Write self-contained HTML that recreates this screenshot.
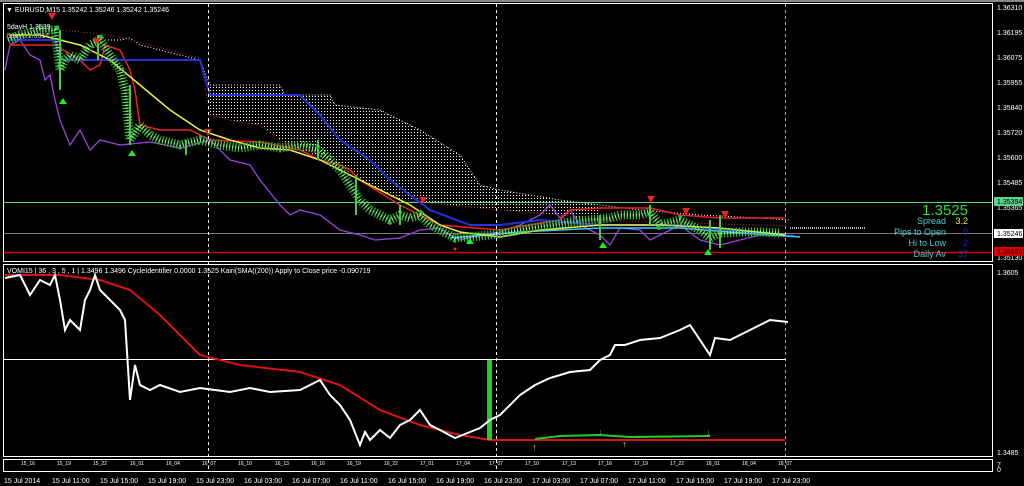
<!DOCTYPE html>
<html><head><meta charset="utf-8"><style>
html,body{margin:0;padding:0;background:#000;width:1024px;height:486px;overflow:hidden}
svg{display:block;font-family:"Liberation Sans",sans-serif}
</style></head><body>
<svg width="1024" height="486" viewBox="0 0 1024 486" xmlns="http://www.w3.org/2000/svg">
<defs>
<pattern id="dots" width="3" height="3" patternUnits="userSpaceOnUse"><rect x="0" y="0" width="1" height="1" fill="#fff"/></pattern>
</defs>
<rect width="1024" height="486" fill="#000"/>
<rect x="0" y="0" width="1024" height="2" fill="#888"/>
<rect x="3.5" y="3.5" width="989" height="258" fill="none" stroke="#fff" stroke-width="1"/>
<line x1="4" y1="202.5" x2="992" y2="202.5" stroke="#5fd08a" stroke-width="1"/>
<line x1="4" y1="233.5" x2="992" y2="233.5" stroke="#777" stroke-width="1"/>
<line x1="4" y1="252.5" x2="992" y2="252.5" stroke="#c00" stroke-width="1.5"/>
<path d="M210,85 L280,85 L285,95 L330,95 L335,105 L380,110 L420,130 L460,155 L480,185 L500,190 L530,195 L560,200 L600,205 L600,220 L560,215 L500,210 L450,205 L400,200 L370,185 L330,160 L300,150 L280,140 L260,125 L230,120 L210,115 Z" fill="url(#dots)"/>
<polyline points="105,40 120,40 130,38 140,45 180,55 200,60 210,85 280,85 285,95 330,95 335,105 380,110 420,130 460,155 480,185 500,190 530,195 560,200 600,205 640,210 700,215 760,218 790,220" fill="none" stroke="#fff" stroke-width="1" stroke-dasharray="1,2"/>
<polyline points="60,30 110,35 150,45 200,58 210,115 230,120 260,125 280,140 300,150 330,160 370,185 400,200 450,205 500,210 560,215 600,220 650,222 720,224 790,226" fill="none" stroke="#a33" stroke-width="1" stroke-dasharray="1,2"/>
<polyline points="790,228 865,228" fill="none" stroke="#bbb" stroke-width="2" stroke-dasharray="1,1"/>
<polyline points="5,70 10,45 20,40 30,55 40,60 45,80 50,75 55,100 60,120 70,145 80,130 90,150 100,140 120,145 150,142 180,148 210,140 230,160 250,165 260,180 280,205 290,215 300,210 320,215 340,230 360,235 375,240 400,238 420,230 440,228 450,235 460,240 480,235 500,232 520,225 540,215 550,205 560,218 570,210 580,225 600,235 610,245 620,228 640,230 650,240 660,235 680,225 700,240 720,245 740,240 760,235 785,235" fill="none" stroke="#9a44dd" stroke-width="1.3"/>
<polyline points="10,45 55,45 80,60 90,70 100,65 105,45 120,50 130,70 135,90 140,125 160,130 190,130 210,140 260,142 300,150 320,160 340,165 350,170 360,180 400,205 440,225 500,230 560,220 570,210 600,208 650,208 680,215 720,218 785,218" fill="none" stroke="#e22" stroke-width="1.5"/>
<polyline points="10,40 55,40 60,60 200,60 210,95 300,95 320,115 340,140 370,160 390,180 430,210 470,225 500,225 540,220 600,225 680,225 740,232 795,236" fill="none" stroke="#2233dd" stroke-width="2"/>
<polyline points="450,238 520,232 600,228 680,228 740,233 800,237" fill="none" stroke="#3cf" stroke-width="1.5"/>
<polyline points="10,35 40,35 80,45 110,60 140,85 170,110 200,130 230,140 260,148 290,150 320,160 350,175 380,190 410,205 440,225 460,232 500,237 540,230 600,225 660,225 720,228 785,235" fill="none" stroke="#ee4" stroke-width="1.5"/>
<polyline points="8,40 20,35 40,30 55,30 60,70 65,60 70,55 80,60 90,45 100,40 110,55 120,70 125,90 130,140 140,125 150,135 160,140 180,145 200,140 220,145 240,148 260,145 280,148 300,145 320,150 330,160 340,170 350,185 360,200 370,210 380,215 390,220 400,215 410,218 420,215 430,225 440,230 455,238 470,237 490,235 510,232 530,228 550,225 570,222 590,220 610,218 620,215 640,215 650,212 660,225 680,220 700,230 710,238 720,233 740,232 760,232 780,233" fill="none" stroke="#3b3" stroke-width="9" stroke-dasharray="1.2,1.8"/>
<polyline points="8,40 20,35 40,30 55,30 60,70 65,60 70,55 80,60 90,45 100,40 110,55 120,70 125,90 130,140 140,125 150,135 160,140 180,145 200,140 220,145 240,148 260,145 280,148 300,145 320,150 330,160 340,170 350,185 360,200 370,210 380,215 390,220 400,215 410,218 420,215 430,225 440,230 455,238 470,237 490,235 510,232 530,228 550,225 570,222 590,220 610,218 620,215 640,215 650,212 660,225 680,220 700,230 710,238 720,233 740,232 760,232 780,233" fill="none" stroke="#8f8" stroke-width="3" stroke-dasharray="1,2"/>
<g stroke="#4c4" stroke-width="2">
<line x1="60" y1="30" x2="60" y2="90"/><line x1="98" y1="35" x2="98" y2="60"/><line x1="130" y1="85" x2="130" y2="145"/><line x1="356" y1="175" x2="356" y2="215"/><line x1="650" y1="205" x2="650" y2="225"/><line x1="710" y1="220" x2="710" y2="250"/><line x1="720" y1="215" x2="720" y2="248"/><line x1="600" y1="215" x2="600" y2="240"/><line x1="186" y1="140" x2="186" y2="155"/><line x1="318" y1="140" x2="318" y2="160"/><line x1="400" y1="205" x2="400" y2="225"/>
</g>
<g fill="#e22">
<path d="M48,13 L56,13 L52,20 Z"/><path d="M93,38 L101,38 L97,45 Z"/><path d="M419,197 L427,197 L423,204 Z"/><path d="M647,196 L655,196 L651,203 Z"/><path d="M682,208 L690,208 L686,215 Z"/><path d="M721,211 L729,211 L725,218 Z"/><path d="M204,129 L212,129 L208,136 Z"/>
</g>
<g fill="#2e2">
<path d="M59,104 L67,104 L63,98 Z"/><path d="M128,156 L136,156 L132,150 Z"/><path d="M466,244 L474,244 L470,238 Z"/><path d="M599,248 L607,248 L603,242 Z"/><path d="M704,255 L712,255 L708,249 Z"/>
</g>
<circle cx="455" cy="249" r="1.5" fill="#e22"/>
<line x1="208.5" y1="4" x2="208.5" y2="472" stroke="#fff" stroke-dasharray="3,3"/>
<line x1="496.5" y1="4" x2="496.5" y2="472" stroke="#fff" stroke-dasharray="3,3"/>
<line x1="785.5" y1="4" x2="785.5" y2="472" stroke="#aaa" stroke-dasharray="3,3"/>
<g font-size="7" fill="#fff">
<text x="6" y="12">▼ EURUSD,M15  1.35242 1.35246 1.35242 1.35246</text>
<text x="7" y="29">5dayH 1.3539</text>
<text x="7" y="38" fill="#ccc">5dayL 1.3514</text>
</g>
<text x="968" y="215" font-size="15" fill="#3d3" text-anchor="end">1.3525</text>
<g font-size="9" text-anchor="end">
<text x="946" y="224" fill="#5cc">Spread</text><text x="968" y="224" fill="#ee4">3.2</text>
<text x="946" y="235" fill="#5cc">Pips to Open</text><text x="968" y="235" fill="#22c">0</text>
<text x="946" y="246" fill="#5cc">Hi to Low</text><text x="968" y="246" fill="#22c">2</text>
<text x="946" y="257" fill="#5cc">Daily Av</text><text x="968" y="257" fill="#33c">37</text>
</g>
<g font-size="7" fill="#fff">
<text x="997" y="10">1.36310</text><text x="997" y="35">1.36195</text><text x="997" y="60">1.36075</text><text x="997" y="85">1.35955</text><text x="997" y="110">1.35840</text><text x="997" y="135">1.35720</text><text x="997" y="160">1.35600</text><text x="997" y="185">1.35485</text><text x="997" y="210">1.35365</text><text x="997" y="260">1.35130</text>
</g>
<rect x="994" y="197" width="29" height="9" fill="#5fd08a"/><text x="997" y="204" font-size="7" fill="#000">1.35394</text>
<rect x="994" y="229" width="29" height="9" fill="#fff"/><text x="997" y="236" font-size="7" fill="#000">1.35246</text>
<rect x="994" y="247" width="29" height="9" fill="#d00"/><text x="997" y="254" font-size="7" fill="#000">1.35156</text>
<rect x="3.5" y="264.5" width="989" height="192" fill="none" stroke="#fff"/>
<line x1="4" y1="359.5" x2="786" y2="359.5" stroke="#fff"/>
<text x="7" y="273" font-size="7" fill="#fff">VOMI15 | 36 , 3 , 5 , 1 |  1.3496 1.3496  CycleIdentifier 0.0000 1.3525  Kairi(SMA((200)) Apply to Close price -0.090719</text>
<polyline points="5,275 60,275 100,280 130,290 160,315 200,355 240,365 300,372 340,385 380,410 420,425 460,435 490,440 600,440 785,440" fill="none" stroke="#d11" stroke-width="2"/>
<polyline points="535,439 560,436 600,435 630,437 710,436" fill="none" stroke="#2c2" stroke-width="2"/>
<rect x="487" y="360" width="5" height="80" fill="#2c2"/>
<polyline points="5,278 20,275 30,295 40,280 50,285 55,275 60,300 65,330 70,320 80,330 85,300 90,290 95,275 100,290 110,300 120,310 125,320 130,400 135,365 140,385 150,390 160,385 180,392 200,388 215,390 230,392 250,388 270,392 300,390 320,380 330,395 340,405 350,420 360,445 365,432 370,440 380,430 390,438 400,425 410,420 420,410 430,425 440,430 455,438 470,432 480,428 490,420 500,415 510,405 520,395 535,385 550,378 570,372 590,370 600,360 610,355 615,345 625,345 640,340 660,338 680,330 690,325 700,340 710,355 715,338 730,340 740,335 760,325 770,320 788,322" fill="none" stroke="#fff" stroke-width="2"/>
<g fill="#3cc" font-size="9"><text x="598" y="435">↓</text><text x="706" y="435">↓</text></g>
<g fill="#ee4" font-size="9"><text x="532" y="450">↑</text><text x="622" y="447">↑</text></g>
<text x="997" y="275" font-size="7" fill="#fff">1.3605</text>
<text x="997" y="455" font-size="7" fill="#fff">1.3485</text>
<rect x="3.5" y="459.5" width="989" height="12" fill="none" stroke="#fff"/>
<g font-size="5" fill="#fff">
<text x="21" y="465">15_16</text><text x="57" y="465">15_19</text><text x="93" y="465">15_22</text><text x="130" y="465">16_01</text><text x="166" y="465">16_04</text><text x="202" y="465">16_07</text><text x="238" y="465">16_10</text><text x="275" y="465">16_13</text><text x="311" y="465">16_16</text><text x="347" y="465">16_19</text><text x="384" y="465">16_22</text><text x="420" y="465">17_01</text><text x="456" y="465">17_04</text><text x="489" y="465">17_07</text><text x="525" y="465">17_10</text><text x="562" y="465">17_13</text><text x="598" y="465">17_16</text><text x="634" y="465">17_19</text><text x="670" y="465">17_22</text><text x="706" y="465">18_01</text><text x="742" y="465">18_04</text><text x="778" y="465">18_07</text>
</g>
<text x="997" y="467" font-size="7" fill="#fff">7</text><text x="997" y="472" font-size="7" fill="#fff">0</text>
<g font-size="7" fill="#fff">
<text x="4" y="483">15 Jul 2014</text><text x="52" y="483">15 Jul 11:00</text><text x="100" y="483">15 Jul 15:00</text><text x="148" y="483">15 Jul 19:00</text><text x="196" y="483">15 Jul 23:00</text><text x="244" y="483">16 Jul 03:00</text><text x="292" y="483">16 Jul 07:00</text><text x="340" y="483">16 Jul 11:00</text><text x="388" y="483">16 Jul 15:00</text><text x="436" y="483">16 Jul 19:00</text><text x="484" y="483">16 Jul 23:00</text><text x="532" y="483">17 Jul 03:00</text><text x="580" y="483">17 Jul 07:00</text><text x="628" y="483">17 Jul 11:00</text><text x="676" y="483">17 Jul 15:00</text><text x="724" y="483">17 Jul 19:00</text><text x="772" y="483">17 Jul 23:00</text>
</g>
</svg>
</body></html>
